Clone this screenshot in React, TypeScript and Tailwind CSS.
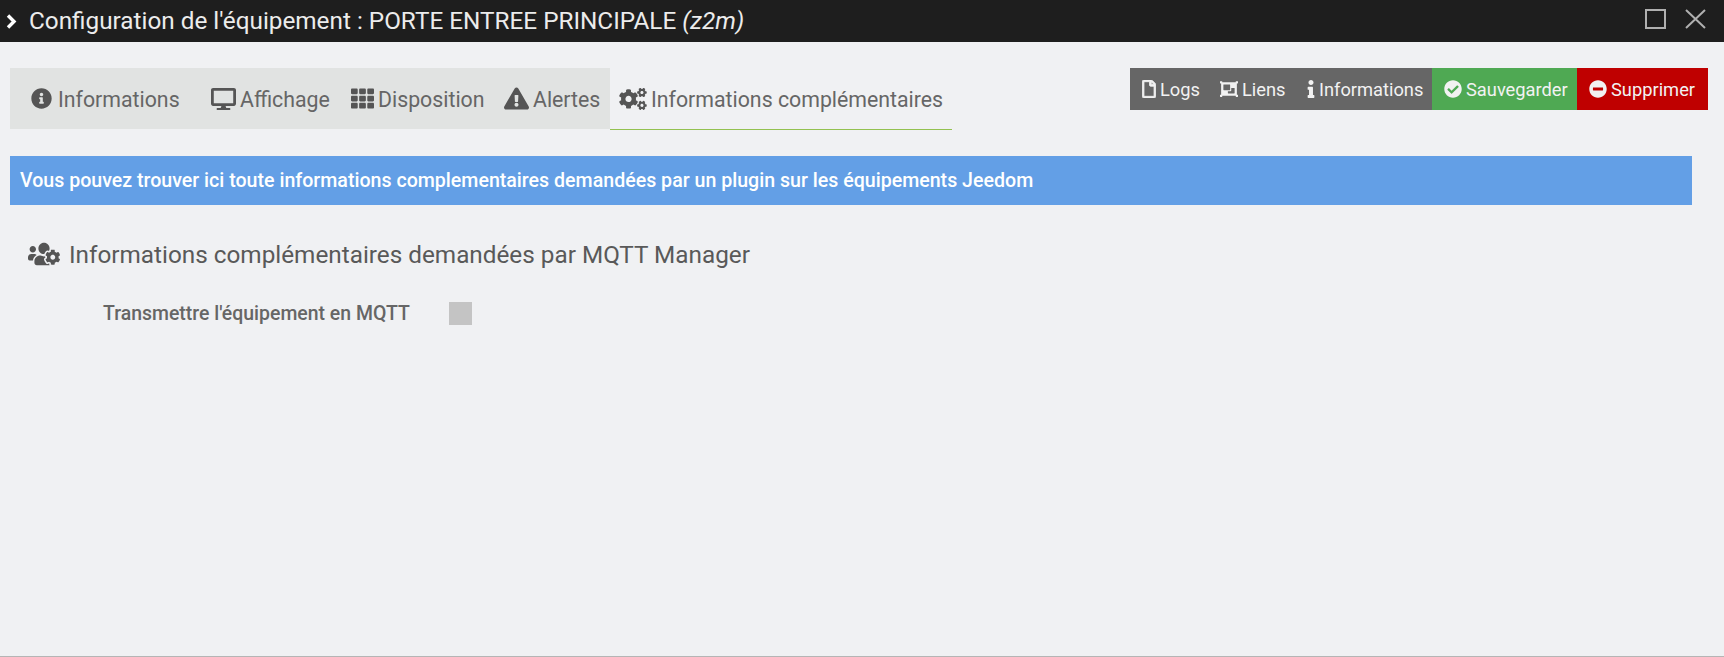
import React from 'react';
import { FaInfoCircle, FaDesktop, FaTh, FaExclamationTriangle, FaCogs, FaInfo, FaCheckCircle, FaMinusCircle, FaUsersCog, FaRegFile, FaObjectGroup } from 'react-icons/fa';

const tabs = [
  { label: 'Informations', icon: <FaInfoCircle className="w-[21px] h-[21px]" />, className: 'w-[171px] pl-[21px] gap-[6px]' },
  { label: 'Affichage', icon: <FaDesktop className="w-[25px] h-[24px]" />, className: 'w-[160px] pl-[30px] gap-[4px]' },
  { label: 'Disposition', icon: <FaTh className="w-[23px] h-[23px]" />, className: 'w-[154px] pl-[10px] gap-[4px]' },
  { label: 'Alertes', icon: <FaExclamationTriangle className="w-[25px] h-[23px]" />, className: 'w-[115px] pl-[9px] gap-[4px]' },
];

const actions = [
  { label: 'Logs', icon: <FaRegFile stroke="currentColor" strokeWidth={24} className="w-[14px] h-[18px]" />, className: 'w-[79px] bg-[#666666] pl-[12px]' },
  { label: 'Liens', icon: <FaObjectGroup className="w-[18px] h-[18px]" />, className: 'w-[87px] bg-[#666666] pl-[11px]' },
  { label: 'Informations', icon: <FaInfo className="w-[8px] h-[18px]" />, className: 'w-[136px] bg-[#666666] pl-[11px]' },
  { label: 'Sauvegarder', icon: <FaCheckCircle className="w-[18px] h-[18px]" />, className: 'w-[145px] bg-[#4fa953] pl-[12px]' },
  { label: 'Supprimer', icon: <FaMinusCircle className="w-[18px] h-[18px]" />, className: 'w-[131px] bg-[#bf0000] pl-[12px]' },
];

export default function App() {
  return (
    <div className="h-[657px] flex flex-col bg-[#f0f1f3] font-['Roboto',sans-serif] border-b border-[#b5b5b5] overflow-hidden">
      {/* Title bar */}
      <div className="h-[42px] shrink-0 bg-[#1e1e1e] flex items-center pl-[6px] pr-[18px] text-[#ececec]">
        <svg width="11" height="15" viewBox="0 0 11 15" fill="none" stroke="white" strokeWidth="3.4" className="shrink-0">
          <path d="M2 1.5L8 7.5L2 13.5" />
        </svg>
        <span className="ml-[12px] text-[24.3px] whitespace-nowrap">
          Configuration de l'équipement : PORTE ENTREE PRINCIPALE <i>(z2m)</i>
        </span>
        <div className="ml-auto mb-[4px] flex items-center gap-[19px] text-[#b0b0b0]">
          <svg width="21" height="20" viewBox="0 0 21 20" fill="none" stroke="currentColor" strokeWidth="2">
            <rect x="1" y="1" width="19" height="18" />
          </svg>
          <svg width="21" height="20" viewBox="0 0 21 20" fill="none" stroke="currentColor" strokeWidth="2">
            <path d="M1 1L20 19M20 1L1 19" />
          </svg>
        </div>
      </div>

      {/* Tabs and actions */}
      <div className="mt-[26px] pl-[10px] pr-[16px] flex justify-between items-start">
        <div className="flex h-[62px]">
          <div className="flex bg-[#e1e3e2] h-[61px]">
            {tabs.map((tab) => (
              <div key={tab.label} className={`flex items-center text-[21.3px] text-[#666666] ${tab.className}`}>
                <span className="text-[#555555]">{tab.icon}</span>
                <span className="mt-[2px]">{tab.label}</span>
              </div>
            ))}
          </div>
          <div className="w-[342px] h-[62px] pl-[9px] flex items-center gap-[4px] border-b border-[#93c150] text-[21.3px] text-[#666666]">
            <FaCogs className="w-[28px] h-[22px] text-[#555555]" />
            <span className="mt-[2px]">Informations complémentaires</span>
          </div>
        </div>
        <div className="flex h-[42px]">
          {actions.map((action) => (
            <div key={action.label} className={`flex items-center gap-[4px] text-[18.3px] text-[#f2f2f2] whitespace-nowrap ${action.className}`}>
              {action.icon}
              <span className="mt-[2px]">{action.label}</span>
            </div>
          ))}
        </div>
      </div>

      {/* Alert */}
      <div className="mt-[26px] ml-[10px] w-[1682px] h-[49px] bg-[#639fe6] flex items-center pl-[10px] text-[19.6px] font-medium text-white">
        Vous pouvez trouver ici toute informations complementaires demandées par un plugin sur les équipements Jeedom
      </div>

      {/* Section */}
      <div className="mt-[33px] pl-[28px] flex items-center gap-[9px] h-[32px] text-[#555555]">
        <FaUsersCog className="w-[32px] h-[26px]" />
        <span className="mt-[2px] text-[24.3px] text-[#595959]">Informations complémentaires demandées par MQTT Manager</span>
      </div>
      <div className="mt-[29px] pl-[103px] flex items-center">
        <label className="w-[346px] text-[19.45px] font-medium text-[#666666]">Transmettre l'équipement en MQTT</label>
        <span className="w-[23px] h-[23px] bg-[#c4c4c4]" />
      </div>
    </div>
  );
}
